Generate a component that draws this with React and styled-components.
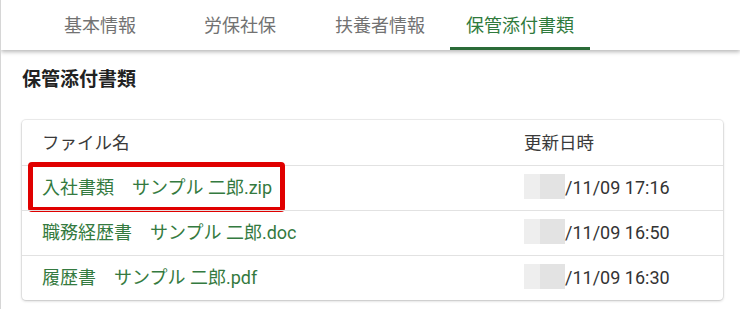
import React from "react";
import styled, { createGlobalStyle } from "styled-components";

const Global = createGlobalStyle`
  html, body { margin: 0; padding: 0; background: #ffffff; }
  body { font-family: Roboto, "Noto Sans CJK JP", sans-serif; }
  * { box-sizing: border-box; }
`;

const Page = styled.div`
  width: 740px;
  height: 309px;
  border-left: 1px solid #d6d6d6;
  background: #ffffff;
  overflow: hidden;
`;

const TabBar = styled.nav`
  display: flex;
  height: 50px;
  padding-left: 29px;
  background: #ffffff;
  box-shadow: 0 2px 4px rgba(0, 0, 0, 0.28);
  position: relative;
  z-index: 1;
`;

const Tab = styled.div`
  width: 140px;
  display: flex;
  align-items: center;
  justify-content: center;
  font-size: 18px;
  color: ${(p) => (p.$active ? "#2f7a3c" : "#727272")};
  border-bottom: 3px solid ${(p) => (p.$active ? "#2a6b38" : "transparent")};
  padding-top: 6px;
  padding-bottom: 5px;
`;

const Content = styled.main`
  padding: 15px 17px 0 21px;
`;

const Title = styled.h2`
  margin: 0;
  font-size: 19px;
  line-height: 30px;
  font-weight: 700;
  color: #222222;
`;

const Card = styled.div`
  margin-top: 25px;
  width: 701px;
  border-radius: 4px;
  background: #ffffff;
  box-shadow: 0 0 0 1px rgba(0, 0, 0, 0.06), 0 1px 3px rgba(0, 0, 0, 0.2);
`;

const Row = styled.div`
  position: relative;
  display: grid;
  grid-template-columns: 482px 1fr;
  align-items: center;
  height: 45px;
  padding: 0 20px;
  border-top: ${(p) => (p.$first ? "none" : "1px solid #e2e2e2")};
  font-size: 18px;
  line-height: 24px;
  color: ${(p) => (p.$head ? "#3a3a3a" : "#2f7a3c")};
`;

const HeadCell = styled.div`
  font-size: 17.5px;
`;

const LinkCell = styled.a`
  color: #347a40;
  text-decoration: none;
  white-space: pre;
`;

const DateCell = styled.div`
  display: flex;
  align-items: center;
  color: #333333;
`;

const Blur = styled.span`
  display: inline-block;
  width: 41px;
  height: 25px;
  margin-bottom: 4px;
  background: linear-gradient(90deg, #eeeeee 0 40%, #e3e3e3 40% 100%);
`;

const Highlight = styled.div`
  position: absolute;
  left: 6px;
  top: -4px;
  width: 257px;
  height: 50px;
  border: 5px solid #e00000;
  border-radius: 4px;
  pointer-events: none;
`;

const tabs = ["基本情報", "労保社保", "扶養者情報", "保管添付書類"];
const files = [
  { name: "入社書類　サンプル 二郎.zip", date: "/11/09 17:16", mark: true },
  { name: "職務経歴書　サンプル 二郎.doc", date: "/11/09 16:50" },
  { name: "履歴書　サンプル 二郎.pdf", date: "/11/09 16:30" },
];

export default function App() {
  return (
    <Page>
      <Global />
      <TabBar>
        {tabs.map((t, i) => (
          <Tab key={t} $active={i === 3}>
            {t}
          </Tab>
        ))}
      </TabBar>
      <Content>
        <Title>保管添付書類</Title>
        <Card>
          <Row $first $head>
            <HeadCell>ファイル名</HeadCell>
            <HeadCell>更新日時</HeadCell>
          </Row>
          {files.map((f) => (
            <Row key={f.name}>
              <LinkCell href="#">{f.name}</LinkCell>
              <DateCell>
                <Blur />
                {f.date}
              </DateCell>
              {f.mark && <Highlight />}
            </Row>
          ))}
        </Card>
      </Content>
    </Page>
  );
}
